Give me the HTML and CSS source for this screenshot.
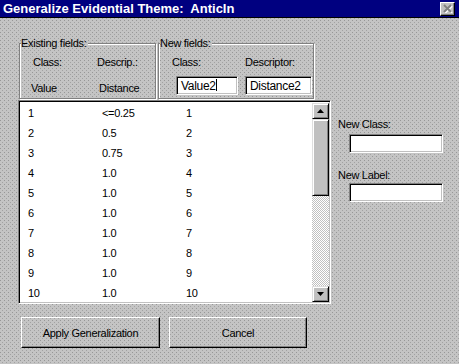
FILE: index.html
```html
<!DOCTYPE html>
<html lang="en">
<head>
  <meta charset="UTF-8">
  <title>Generalize Evidential Theme</title>
  <link rel="stylesheet" href="styles.css">
</head>
<body>
  <div class="window">
    <div class="titlebar">
      <span class="title">Generalize Evidential Theme:  AnticIn</span>
      <div class="close">
        <svg width="11" height="9" viewBox="0 0 11 9">
          <path d="M2 1 L9 8 M9 1 L2 8" stroke="#fff" stroke-width="2" transform="translate(1 1)"/>
          <path d="M2 1 L9 8 M9 1 L2 8" stroke="#808080" stroke-width="2"/>
        </svg>
      </div>
    </div>

    <div class="content">
      <div class="top-row">
        <div class="group existing">
          <span class="group-label">Existing fields:</span>
          <div class="field-grid">
            <span>Class:</span><span>Descrip.:</span>
            <span class="val">Value</span><span class="val2">Distance</span>
          </div>
        </div>
        <div class="group new">
          <span class="group-label">New fields:</span>
          <div class="new-grid">
            <div class="new-col first">
              <span>Class:</span>
              <div class="textbox w62">Value2<span class="ibeam"></span></div>
            </div>
            <div class="new-col">
              <span>Descriptor:</span>
              <div class="textbox w67">Distance2</div>
            </div>
          </div>
        </div>
      </div>

      <div class="mid-row">
        <div class="listbox">
          <div class="rows">
            <div class="row"><span>1</span><span>&lt;=0.25</span><span>1</span></div>
            <div class="row"><span>2</span><span>0.5</span><span>2</span></div>
            <div class="row"><span>3</span><span>0.75</span><span>3</span></div>
            <div class="row"><span>4</span><span>1.0</span><span>4</span></div>
            <div class="row"><span>5</span><span>1.0</span><span>5</span></div>
            <div class="row"><span>6</span><span>1.0</span><span>6</span></div>
            <div class="row"><span>7</span><span>1.0</span><span>7</span></div>
            <div class="row"><span>8</span><span>1.0</span><span>8</span></div>
            <div class="row"><span>9</span><span>1.0</span><span>9</span></div>
            <div class="row"><span>10</span><span>1.0</span><span>10</span></div>
          </div>
          <div class="scrollbar">
            <div class="sb-btn">
              <svg width="7" height="4" viewBox="0 0 7 4"><path d="M3.5 0 L7 4 L0 4 Z" fill="#000"/></svg>
            </div>
            <div class="sb-thumb"></div>
            <div class="sb-track"></div>
            <div class="sb-btn">
              <svg width="7" height="4" viewBox="0 0 7 4"><path d="M0 0 L7 0 L3.5 4 Z" fill="#000"/></svg>
            </div>
          </div>
        </div>

        <div class="side">
          <span class="side-label">New Class:</span>
          <div class="textbox side-box"></div>
          <span class="side-label second">New Label:</span>
          <div class="textbox side-box tight"></div>
        </div>
      </div>

      <div class="buttons">
        <div class="button apply">Apply Generalization</div>
        <div class="button cancel">Cancel</div>
      </div>
    </div>
  </div>
</body>
</html>
```

FILE: styles.css
```css
html, body {
  margin: 0;
  padding: 0;
}
body {
  width: 459px;
  height: 364px;
  overflow: hidden;
  font-family: "Liberation Sans", Arial, sans-serif;
  font-size: 11px;
  letter-spacing: -0.3px;
  color: #000;
}
/* dotted dialog face, pinned to the viewport so labels can reuse it */
.window,
.group-label {
  background-color: #c4c4c4;
  background-image:
    conic-gradient(at 1px 1px, transparent 75%, #979797 0),
    conic-gradient(at 1px 1px, transparent 75%, #a2a2a2 0);
  background-size: 4px 4px, 4px 4px;
  background-position: 0 0, 2px 2px;
  background-attachment: fixed;
}
.window {
  width: 459px;
  height: 364px;
}
.titlebar {
  height: 17px;
  background: #000080;
  border-bottom: 1px solid #000;
  display: flex;
  align-items: center;
  justify-content: space-between;
  padding: 0 4px 0 3px;
}
.title {
  color: #fff;
  font-weight: bold;
  font-size: 13px;
  letter-spacing: 0;
  white-space: pre;
}
.close {
  width: 15px;
  height: 14px;
  box-sizing: border-box;
  background: #c0c0c0;
  border: 1px solid;
  border-color: #fff #000 #000 #fff;
  box-shadow: inset -1px -1px #808080;
  display: flex;
  align-items: center;
  justify-content: center;
}
.content {
  padding: 25px 0 0 18px;
}
.top-row {
  display: flex;
  gap: 2px;
  margin-left: 1px;
}
.group {
  position: relative;
  box-sizing: border-box;
  height: 56px;
  border: 1px solid #808080;
  box-shadow: inset 1px 1px #fff, 1px 1px #fff;
}
.existing {
  width: 137px;
}
.new {
  width: 156px;
}
.group-label {
  position: absolute;
  top: -7px;
  left: 1px;
  line-height: 13px;
  padding-right: 1px;
}
.field-grid {
  display: grid;
  grid-template-columns: 64px auto;
  row-gap: 13px;
  padding: 12px 0 0 13px;
  line-height: 13px;
}
.field-grid .val {
  margin-left: -2px;
}
.field-grid .val2 {
  margin-left: 2px;
}
.new-grid {
  display: flex;
  padding: 12px 0 0 13px;
  line-height: 13px;
}
.new-col {
  display: flex;
  flex-direction: column;
  gap: 7px;
}
.new-col.first {
  width: 73px;
}
.new-col.first .textbox {
  margin-left: 4px;
}
.textbox {
  position: relative;
  box-sizing: border-box;
  height: 19px;
  background: #fff;
  border: 1px solid;
  border-color: #808080 #fff #fff #808080;
  box-shadow: inset 1px 1px #000, inset -1px -1px #c0c0c0;
  padding: 2px 0 0 4px;
  font-size: 12px;
  line-height: 14px;
}
.w62 {
  width: 62px;
}
.w67 {
  width: 67px;
}
.ibeam {
  position: absolute;
  left: 39px;
  top: 2px;
  width: 1px;
  height: 12px;
  background: #000;
}
.mid-row {
  display: flex;
  margin-top: 1px;
}
.listbox {
  display: flex;
  box-sizing: border-box;
  width: 313px;
  height: 204px;
  background: #fff;
  border: 1px solid;
  border-color: #808080 #fff #fff #808080;
  box-shadow: inset 1px 1px #000, inset -1px -1px #c0c0c0;
  padding: 2px 1px 1px 2px;
}
.rows {
  flex: 1;
  padding-left: 7px;
}
.row {
  display: grid;
  grid-template-columns: 74px 84px auto;
  height: 20px;
  line-height: 20px;
}
.scrollbar {
  width: 17px;
  display: flex;
  flex-direction: column;
}
.sb-btn,
.sb-thumb {
  box-sizing: border-box;
  background: #c0c0c0;
  border: 1px solid;
  border-color: #dfdfdf #000 #000 #dfdfdf;
  box-shadow: inset 1px 1px #fff, inset -1px -1px #808080;
}
.sb-btn {
  height: 16px;
  display: flex;
  align-items: center;
  justify-content: center;
}
.sb-thumb {
  height: 77px;
}
.sb-track {
  flex: 1;
  background-color: #c0c0c0;
  background-image:
    linear-gradient(45deg, #fff 25%, transparent 25%, transparent 75%, #fff 75%),
    linear-gradient(45deg, #fff 25%, transparent 25%, transparent 75%, #fff 75%);
  background-size: 2px 2px;
  background-position: 0 0, 1px 1px;
}
.side {
  display: flex;
  flex-direction: column;
  padding: 18px 0 0 7px;
  line-height: 13px;
}
.side-box {
  width: 94px;
  margin: 3px 0 0 11px;
}
.side-label.second {
  margin-top: 16px;
}
.side-box.tight {
  margin-top: 1px;
}
.buttons {
  display: flex;
  gap: 9px;
  margin: 13px 0 0 3px;
}
.button {
  box-sizing: border-box;
  height: 31px;
  display: flex;
  align-items: center;
  justify-content: center;
  border: 1px solid;
  border-color: #fff #000 #000 #fff;
  box-shadow: inset -1px -1px #808080;
}
.apply {
  width: 139px;
}
.cancel {
  width: 138px;
}
```
